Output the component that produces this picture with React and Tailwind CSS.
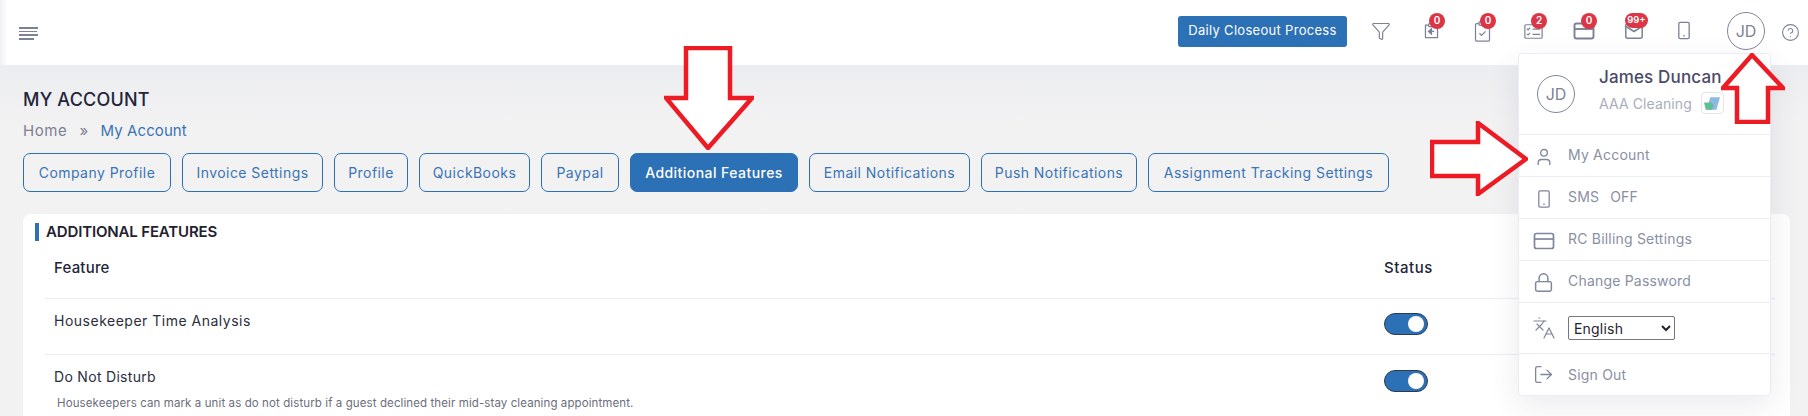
import React from "react";
import { Filter, CircleHelp, User, Lock, Languages, LogOut } from "lucide-react";

const font = { fontFamily: "Inter, 'Noto Sans', sans-serif" };

const tabs = [
  ["Company Profile", "w-[148px]"],
  ["Invoice Settings", "w-[141px]"],
  ["Profile", "w-[74px]"],
  ["QuickBooks", "w-[111px]"],
  ["Paypal", "w-[78px]"],
  ["Additional Features", "w-[168px]", true],
  ["Email Notifications", "w-[161px]"],
  ["Push Notifications", "w-[156px]"],
  ["Assignment Tracking Settings", "w-[241px]"],
];

function Badge({ children, wide }) {
  return (
    <span
      className={`absolute top-[12px] flex items-center justify-center rounded-full bg-[#dc3545] text-white font-semibold ${
        wide ? "left-[16px] w-[23px] h-[15px] text-[9.5px]" : "left-[23px] w-[16px] h-[16px] text-[10px]"
      }`}
    >
      {children}
    </span>
  );
}

function CardIcon({ className, strokeWidth = 1.7 }) {
  return (
    <svg viewBox="0 0 24 24" fill="none" stroke="currentColor" strokeWidth={strokeWidth} className={className}>
      <rect x="2.5" y="4.5" width="19" height="15" rx="2" />
      <path d="M2.5 10h19" />
    </svg>
  );
}

function PhoneIcon({ className }) {
  return (
    <svg viewBox="0 0 12 18" fill="none" stroke="currentColor" strokeWidth="1.3" className={className}>
      <rect x="0.8" y="0.8" width="10.4" height="16.4" rx="1.4" />
      <path d="M5.3 14.2h1.4" strokeWidth="1.4" />
    </svg>
  );
}

function HeaderIcons() {
  const c = "text-[#7c8296]";
  return (
    <div className={`flex items-center mt-[-4px] ${c}`}>
      <div className="relative w-[51px] h-[60px] flex items-center justify-center">
        <Filter className="w-[20px] h-[20px]" strokeWidth={1.4} />
      </div>
      <div className="relative w-[51px] h-[60px] flex items-center justify-center">
        <svg viewBox="0 0 16 18" className="w-[15px] h-[16px] mt-[1px]" fill="none" stroke="currentColor" strokeWidth="1.4">
          <path d="M4.5 2.5H1.2v14h13.6v-14h-3.3" />
          <rect x="4.8" y="0.8" width="6.4" height="3.2" rx="1" />
          <path d="M11 9.5H7.5M8 6.5 4.6 9.5 8 12.5z" fill="currentColor" />
        </svg>
        <Badge>0</Badge>
      </div>
      <div className="relative w-[51px] h-[60px] flex items-center justify-center">
        <svg viewBox="0 0 18 24" className="w-[17px] h-[21px] mt-[1px]" fill="none" stroke="currentColor" strokeWidth="1.4">
          <path d="M5 3H2.5A1.5 1.5 0 0 0 1 4.5v17A1.5 1.5 0 0 0 2.5 23h13a1.5 1.5 0 0 0 1.5-1.5v-17A1.5 1.5 0 0 0 15.5 3H13" />
          <rect x="5" y="1" width="8" height="4" rx="1" />
          <path d="m5.5 14 2.4 2.4 4.6-4.6" />
        </svg>
        <Badge>0</Badge>
      </div>
      <div className="relative w-[50px] h-[60px] flex items-center justify-center">
        <svg viewBox="0 0 20 16" className="w-[19px] h-[15px] mt-[1px]" fill="none" stroke="currentColor" strokeWidth="1.3">
          <rect x="0.8" y="0.8" width="18.4" height="14.4" rx="1.2" />
          <path d="m3 5 1.2 1.2L6.4 4M3 10.5l1.2 1.2 2.2-2.2M9 5.5h8M9 11h8" />
        </svg>
        <Badge>2</Badge>
      </div>
      <div className="relative w-[51px] h-[60px] flex items-center justify-center">
        <CardIcon className="w-[24px] h-[24px] mt-[1px]" strokeWidth={1.9} />
        <Badge>0</Badge>
      </div>
      <div className="relative w-[50px] h-[60px] flex items-center justify-center">
        <svg viewBox="0 0 18 16" className="w-[18px] h-[16px] mt-[1px]" fill="none" stroke="currentColor" strokeWidth="1.5">
          <rect x="0.8" y="0.8" width="16.4" height="14.4" rx="2" />
          <path d="m1 3.5 8 5 8-5" />
        </svg>
        <Badge wide>99+</Badge>
      </div>
      <div className="relative w-[50px] h-[60px] flex items-center justify-center">
        <PhoneIcon className="w-[12px] h-[19px]" />
      </div>
    </div>
  );
}

function Avatar({ className }) {
  return (
    <div className={`rounded-full border border-[#81869c] flex items-center justify-center text-[#7c8296] text-[16px] w-[38px] h-[38px] ${className || ""}`}>
      JD
    </div>
  );
}

function MenuRow({ icon, children, h = "h-[42px]", last, nudge = true }) {
  return (
    <div className={`flex items-center ${h} ${last ? "" : "border-b border-[#ebedf5]"} text-[#8a8fa3] text-[14px] tracking-[0.2px]`}>
      <div className={`w-[49px] flex justify-center text-[#80869b] ${nudge ? "mt-[2px]" : ""}`}>{icon}</div>
      <div className={`flex items-center ${nudge ? "mt-[-2px]" : ""}`}>{children}</div>
    </div>
  );
}

function Toggle() {
  return (
    <div className="w-[44px] h-[22px] rounded-full bg-[#2c70b6] border border-[#2e3a4d] flex items-center justify-end pr-[3px]">
      <div className="w-[16px] h-[16px] rounded-full bg-white" />
    </div>
  );
}

function Arrow({ className, w, h, pts }) {
  return (
    <svg className={`absolute ${className}`} width={w} height={h} viewBox={`0 0 ${w} ${h}`}>
      <polygon points={pts} fill="#ffffff" stroke="#ed1c24" strokeWidth="4.5" strokeLinejoin="miter" />
    </svg>
  );
}

export default function App() {
  return (
    <div style={font} className="relative w-[1808px] h-[416px] overflow-hidden bg-[#f2f2f3] text-[#1f2230]">
      <header className="relative h-[65px] bg-white flex items-center justify-between pl-[19px] pr-[8px]">
        <div className="absolute left-0 top-0 w-[8px] h-full bg-linear-to-r from-[#f0f0f3] to-white" />
        <div className="relative flex flex-col gap-[2px] mt-[2px]">
          <span className="block w-[19px] h-[2px] bg-[#7c8296]" />
          <span className="block w-[18px] h-[1px] bg-[#7c8296]" />
          <span className="block w-[19px] h-[2px] bg-[#7c8296]" />
          <span className="block w-[15px] h-[2px] bg-[#7c8296]" />
        </div>
        <div className="flex items-center">
          <button className="w-[169px] h-[31px] mt-[-3px] rounded-[3px] bg-[#2c70b6] text-white text-[13px] mr-[8px] tracking-[0.3px]">
            Daily Closeout Process
          </button>
          <HeaderIcons />
          <Avatar className="ml-[18px] mt-[-4px]" />
          <CircleHelp className="w-[19px] h-[19px] ml-[16px] text-[#7c8296]" strokeWidth={1.4} />
        </div>
      </header>

      <main className="bg-linear-to-b from-[#ecedf0] to-[#f2f2f3] to-[60px] h-[351px]">
        <div className="pl-[23px] pt-[22px]">
          <h1 className="text-[18px] leading-[26px] font-medium tracking-[0.2px] text-[#23253a]">MY ACCOUNT</h1>
          <div className="flex items-center mt-[8px] text-[15px] leading-[20px] tracking-[0.25px]">
            <span className="text-[#7d8090] tracking-[0.6px]">Home</span>
            <span className="text-[#7d8090] ml-[12px] mr-[12px]">»</span>
            <span className="text-[#3a74b4] tracking-[0.1px]">My Account</span>
          </div>
        </div>
        <nav className="flex gap-[11px] pl-[23px] mt-[12px]">
          {tabs.map(([label, w, active]) => (
            <button
              key={label}
              className={`${w} h-[39px] rounded-[7px] border border-[#2c70b6] text-[14px] tracking-[0.45px] ${
                active ? "bg-[#2c70b6] text-white font-medium" : "text-[#3a74b4]"
              }`}
            >
              {label}
            </button>
          ))}
        </nav>

        <section className="ml-[23px] mr-[18px] mt-[22px] h-[300px] rounded-t-[8px] bg-white pt-[9px] overflow-hidden">
          <h2 className="border-l-[4px] border-[#2c70b6] ml-[12px] pl-[7px] h-[18px] leading-[18px] text-[15px] font-semibold tracking-[-0.15px] text-[#1f2230]">
            ADDITIONAL FEATURES
          </h2>
          <div className="ml-[22px] mr-[15px] mt-[9px] text-[14px] tracking-[0.2px]">
            <div className="flex h-[49px] border-b border-[#ebedf5] pt-[7px] font-medium text-[#23253a]">
              <div className="w-[1339px] pl-[9px] text-[15px]">Feature</div>
              <div className="text-[15px] tracking-[0.55px]">Status</div>
            </div>
            <div className="flex h-[56px] border-b border-[#ebedf5]">
              <div className="w-[1339px] pl-[9px] pt-[11px] text-[#2b2d3e] tracking-[0.5px]">Housekeeper Time Analysis</div>
              <div className="pt-[14px]"><Toggle /></div>
            </div>
            <div className="flex">
              <div className="w-[1339px] pl-[9px] pt-[11px] text-[#2b2d3e]">
                <div className="tracking-[0.3px]">Do Not Disturb</div>
                <div className="text-[11.5px] leading-[14px] mt-[9px] ml-[3px] text-[#6b6e7c] tracking-[0.1px]">
                  Housekeepers can mark a unit as do not disturb if a guest declined their mid-stay cleaning appointment.
                </div>
              </div>
              <div className="pt-[15px]"><Toggle /></div>
            </div>
          </div>
        </section>
      </main>

      <div className="absolute left-[1518px] top-[53px] w-[253px] h-[343px] bg-white border border-[#ebedf5] rounded-[4px] shadow-[0_10px_30px_rgba(60,60,90,0.1)]">
        <div className="flex h-[81px] border-b border-[#ebedf5]">
          <Avatar className="ml-[18px] mt-[21px]" />
          <div className="ml-[24px] pt-[11px]">
            <div className="text-[17px] leading-[24px] font-medium tracking-[0.15px] text-[#4b4a68]">James Duncan</div>
            <div className="flex items-center mt-[3px]">
              <span className="text-[#a9adbb] text-[14px] tracking-[0.1px]">AAA Cleaning</span>
              <span className="ml-[9px] w-[23px] h-[22px] rounded-[4px] border border-[#e3e5ec] flex items-center justify-center">
                <svg viewBox="0 0 18 14" className="w-[16px] h-[13px]">
                  <path d="M7 0h11l-4 14H3z" fill="#8fb9e3" />
                  <path d="M0 6h8l3 3-2 5H2z" fill="#5fbf93" />
                </svg>
              </span>
            </div>
          </div>
        </div>
        <MenuRow icon={<User className="w-[20px] h-[20px]" strokeWidth={1.6} />}>My Account</MenuRow>
        <MenuRow icon={<PhoneIcon className="w-[12px] h-[18px]" />}>
          <span>SMS</span><span className="ml-[11px]">OFF</span>
        </MenuRow>
        <MenuRow icon={<CardIcon className="w-[24px] h-[24px]" />}>RC Billing Settings</MenuRow>
        <MenuRow icon={<Lock className="w-[21px] h-[21px]" strokeWidth={1.7} />}>Change Password</MenuRow>
        <MenuRow nudge={false} h="h-[51px]" icon={<Languages className="w-[24px] h-[24px]" strokeWidth={1.2} />}>
          <select defaultValue="English" className="w-[107px] h-[24px] border border-[#767676] rounded-[2px] bg-white text-[14px] text-[#1f2230] pl-[1px]">
            <option>English</option>
          </select>
        </MenuRow>
        <MenuRow nudge={false} h="h-[41px]" last icon={<LogOut className="w-[21px] h-[21px]" strokeWidth={1.5} />}>Sign Out</MenuRow>
      </div>

      <Arrow className="left-[664px] top-[46px]" w={90} h={104} pts="22,2 66,2 66,52 88,52 44,102 2,52 22,52" />
      <Arrow className="left-[1721px] top-[53px]" w={64} h={71} pts="31,2 62,35 47,35 47,69 16,69 16,35 2,35" />
      <Arrow className="left-[1430px] top-[121px]" w={98} h={75} pts="2,21 48,21 48,2 96,38 48,73 48,55 2,55" />
    </div>
  );
}
